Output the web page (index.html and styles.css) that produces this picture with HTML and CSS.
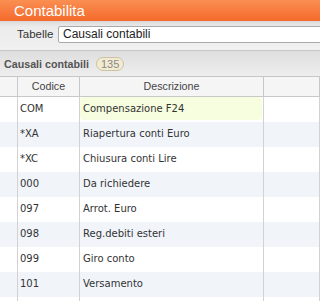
FILE: index.html
```html
<!DOCTYPE html>
<html>
<head>
<meta charset="utf-8">
<link rel="stylesheet" href="styles.css">
</head>
<body>
<div class="app">
  <div class="titlebar">Contabilita</div>
  <div class="toolbar">
    <span class="label">Tabelle</span>
    <div class="field">Causali contabili</div>
  </div>
  <div class="section">
    <span class="section-title">Causali contabili</span>
    <span class="badge">135</span>
  </div>
  <div class="grid">
    <div class="row head">
      <div class="cell"></div>
      <div class="cell center">Codice</div>
      <div class="cell center">Descrizione</div>
      <div class="cell"></div>
    </div>
    <div class="row">
      <div class="cell"></div>
      <div class="cell code">COM</div>
      <div class="cell desc"><div class="selected">Compensazione F24</div></div>
      <div class="cell"></div>
    </div>
    <div class="row alt">
      <div class="cell"></div>
      <div class="cell code">*XA</div>
      <div class="cell desc"><div class="plain">Riapertura conti Euro</div></div>
      <div class="cell"></div>
    </div>
    <div class="row">
      <div class="cell"></div>
      <div class="cell code">*XC</div>
      <div class="cell desc"><div class="plain">Chiusura conti Lire</div></div>
      <div class="cell"></div>
    </div>
    <div class="row alt">
      <div class="cell"></div>
      <div class="cell code">000</div>
      <div class="cell desc"><div class="plain">Da richiedere</div></div>
      <div class="cell"></div>
    </div>
    <div class="row">
      <div class="cell"></div>
      <div class="cell code">097</div>
      <div class="cell desc"><div class="plain">Arrot. Euro</div></div>
      <div class="cell"></div>
    </div>
    <div class="row alt">
      <div class="cell"></div>
      <div class="cell code">098</div>
      <div class="cell desc"><div class="plain">Reg.debiti esteri</div></div>
      <div class="cell"></div>
    </div>
    <div class="row">
      <div class="cell"></div>
      <div class="cell code">099</div>
      <div class="cell desc"><div class="plain">Giro conto</div></div>
      <div class="cell"></div>
    </div>
    <div class="row alt">
      <div class="cell"></div>
      <div class="cell code">101</div>
      <div class="cell desc"><div class="plain">Versamento</div></div>
      <div class="cell"></div>
    </div>
    <div class="row">
      <div class="cell"></div>
      <div class="cell code"></div>
      <div class="cell desc"></div>
      <div class="cell"></div>
    </div>
  </div>
</div>
</body>
</html>
```

FILE: styles.css
```css
html, body {
  margin: 0;
  padding: 0;
  background: #ffffff;
  overflow: hidden;
}

.app {
  width: 100%;
  min-width: 271px;
  height: 301px;
  overflow: hidden;
  font-family: "Liberation Sans", Arial, sans-serif;
}

.titlebar {
  height: 21px;
  line-height: 21px;
  padding-left: 14px;
  background: linear-gradient(#fa8f52, #f6692c);
  color: #ffffff;
  font-size: 15px;
  box-sizing: border-box;
}

.toolbar {
  height: 30px;
  box-sizing: border-box;
  padding-top: 5px;
  padding-left: 17px;
  display: flex;
  align-items: flex-start;
  gap: 4px;
  background: linear-gradient(#d9d9d9, #ececec 20%, #f0f0f0);
  border-bottom: 1px solid #c7c7c7;
  overflow: hidden;
}

.label {
  font-size: 11.5px;
  color: #333333;
  line-height: 17px;
  width: 37px;
  flex: none;
}

.field {
  flex: none;
  width: 400px;
  height: 17px;
  box-sizing: border-box;
  border: 1px solid #a9a9a9;
  border-radius: 2px;
  background: #ffffff;
  font-size: 12px;
  line-height: 15px;
  padding-left: 4px;
  color: #222222;
}

.section {
  height: 26px;
  box-sizing: border-box;
  padding-left: 4px;
  display: flex;
  align-items: center;
  gap: 7px;
  background: linear-gradient(#dedede, #eeeeee);
  border-bottom: 1px solid #c6c6c6;
}

.section-title {
  font-weight: bold;
  font-size: 10.7px;
  color: #555555;
}

.badge {
  height: 14px;
  box-sizing: border-box;
  padding: 0 4px;
  border: 1px solid #cbc3a2;
  border-radius: 7px;
  background: #f2ebd1;
  color: #8a8a8a;
  font-size: 11px;
  line-height: 12px;
}

.row {
  display: grid;
  grid-template-columns: 18px 62px 184px 1fr;
  height: 25px;
  background: #ffffff;
}

.row.alt {
  background: #f1f5fa;
}

.row.head {
  height: 20px;
  background: #f5f5f5;
  border-bottom: 1px solid #c8c8c8;
  box-sizing: border-box;
}

.cell {
  box-sizing: border-box;
  border-right: 1px solid #d2d2d2;
  overflow: hidden;
  white-space: nowrap;
}

.head .cell {
  font-size: 10.7px;
  color: #444444;
  line-height: 19px;
  border-right-color: #c8c8c8;
}

.center {
  text-align: center;
}

.code {
  font-family: "DejaVu Sans", Verdana, sans-serif;
  font-size: 10px;
  color: #333333;
  line-height: 24px;
  padding-left: 2px;
}

.desc {
  font-family: "DejaVu Sans", Verdana, sans-serif;
  font-size: 10px;
  color: #333333;
}

.plain {
  line-height: 24px;
  padding-left: 3px;
}

.selected {
  height: 23px;
  line-height: 23px;
  margin-right: 1px;
  padding-left: 3px;
  background: #f7fddf;
  border-radius: 4px;
}
```
